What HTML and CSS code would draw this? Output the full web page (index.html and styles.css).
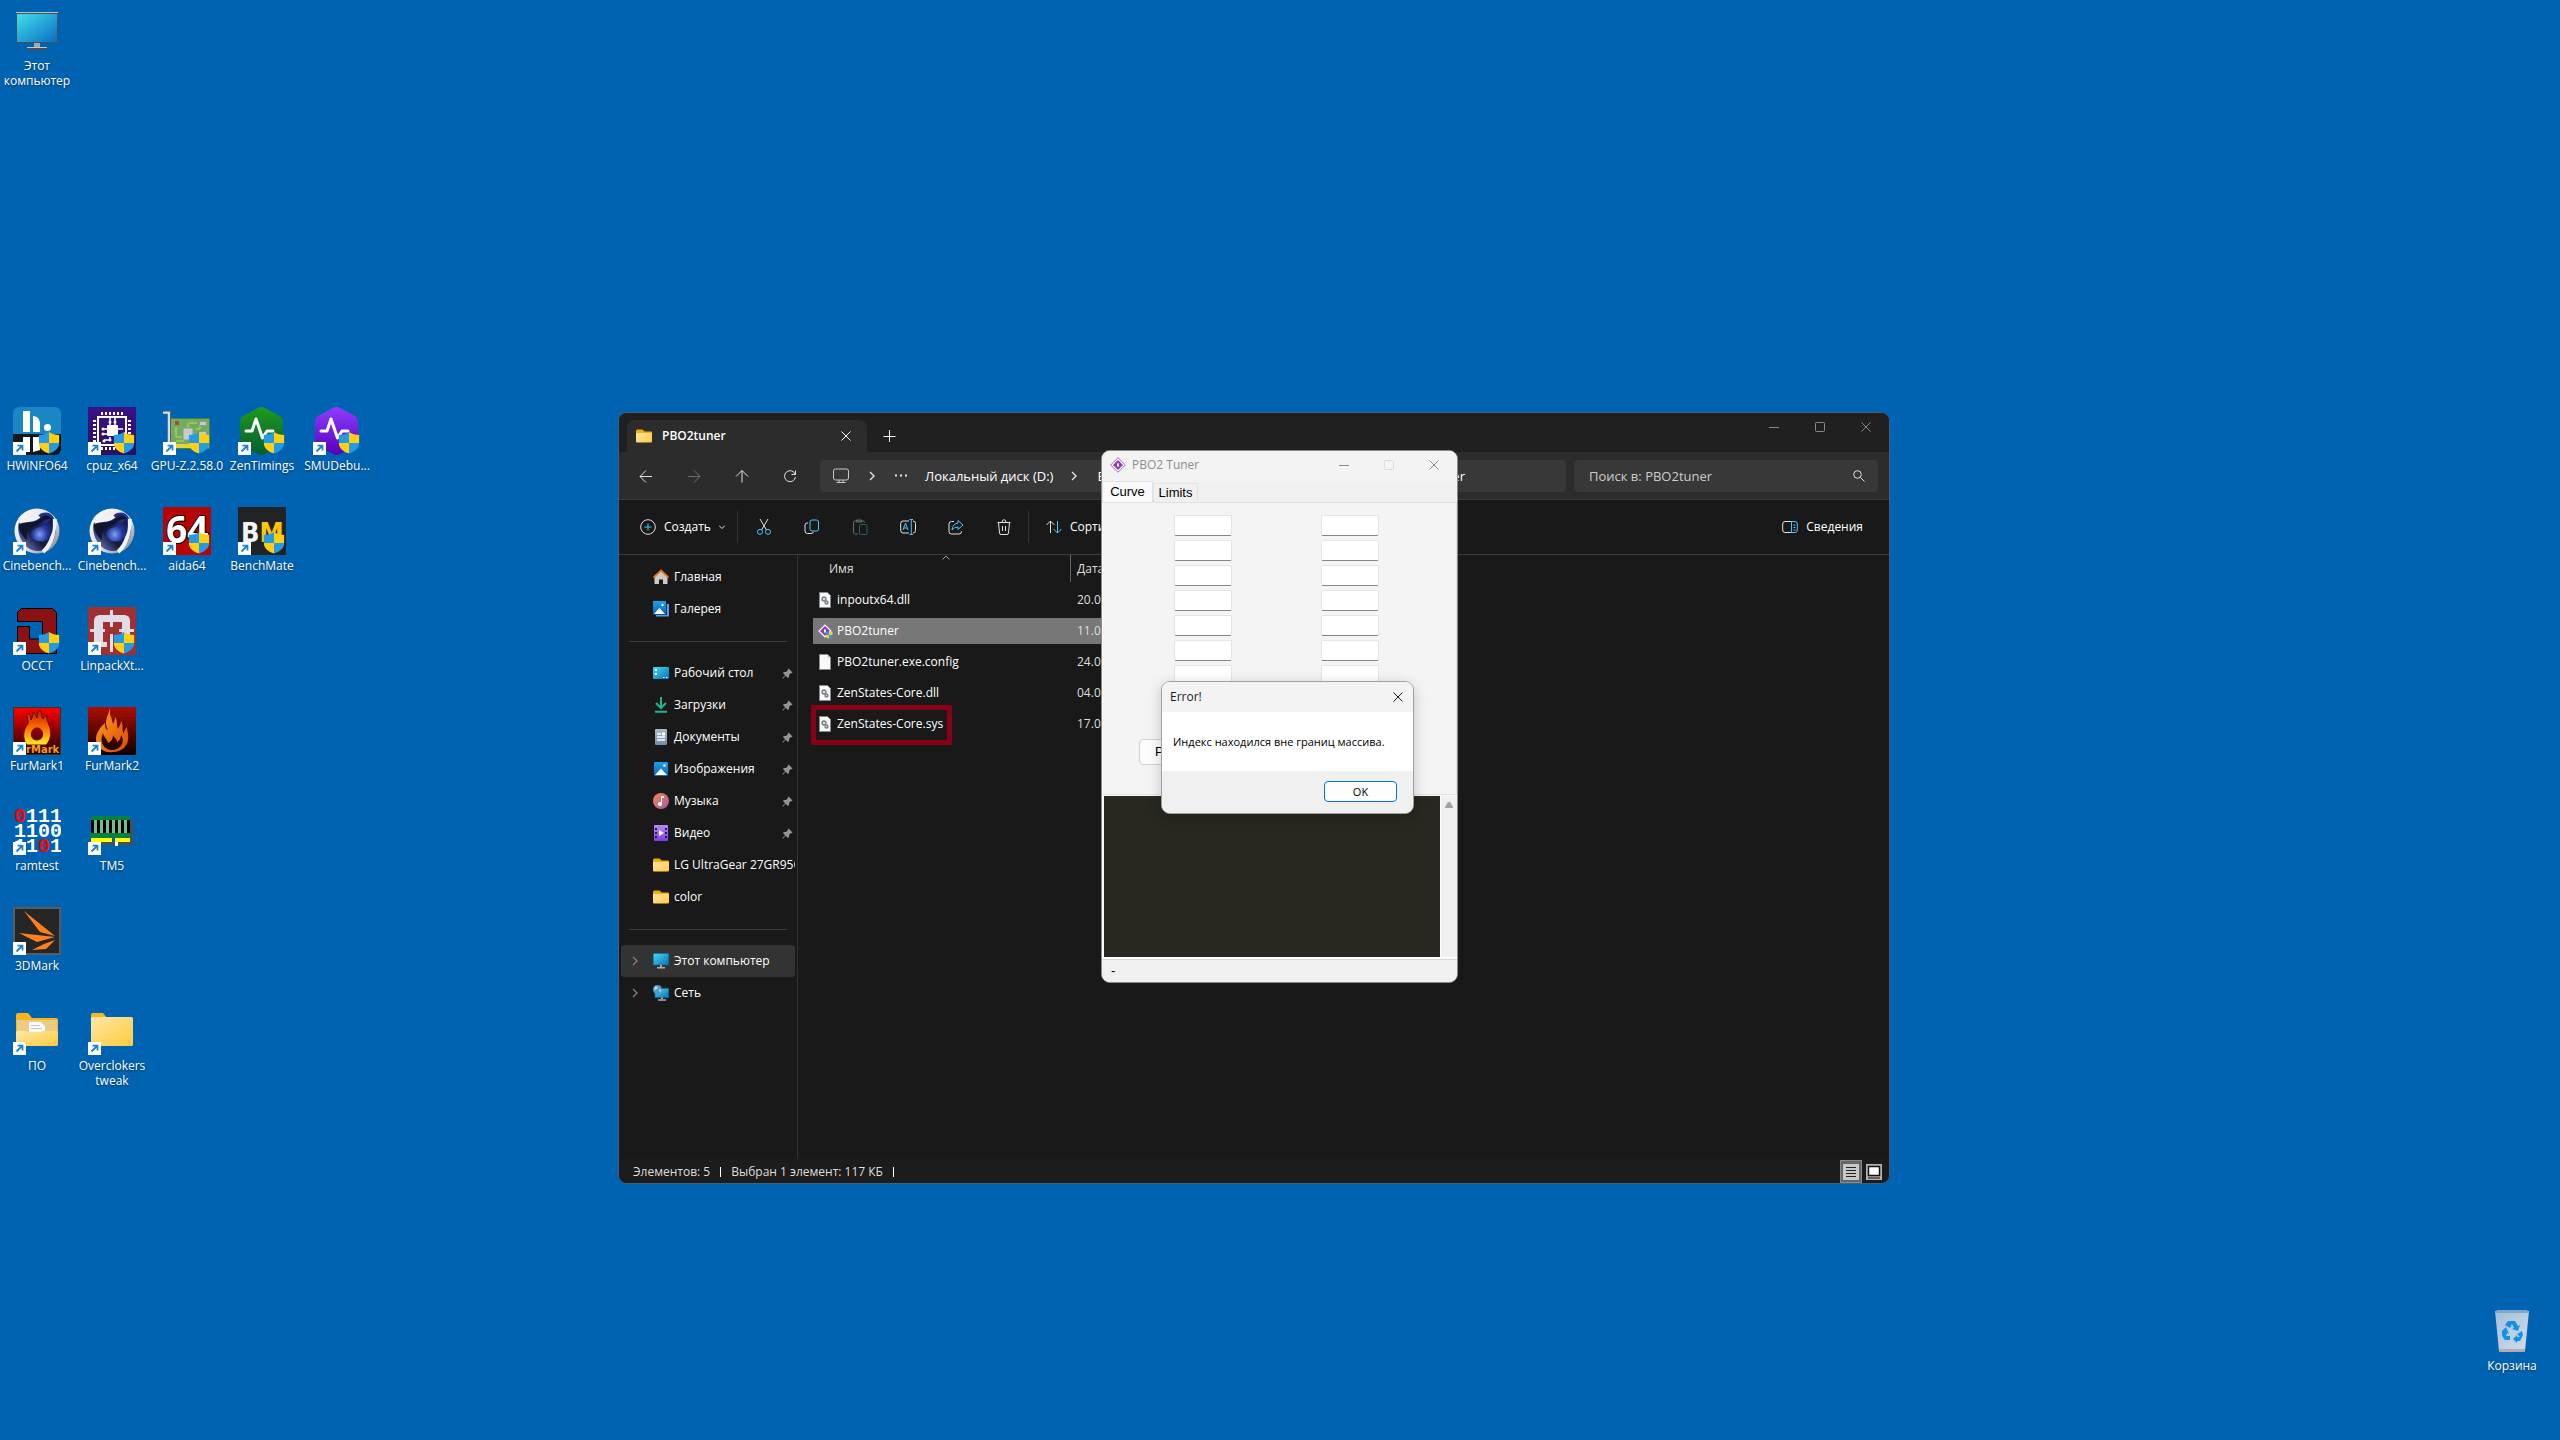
FILE: index.html
```html
<!DOCTYPE html>
<html lang="ru">
<head>
<meta charset="utf-8">
<title>PBO2tuner</title>
<link rel="stylesheet" href="styles.css">
</head>
<body>
<svg class="sprite" aria-hidden="true">
  <defs>
    <linearGradient id="screen" x1="0" y1="0" x2="1" y2="1"><stop offset="0" stop-color="#3fe0e8"/><stop offset="1" stop-color="#0b6cc4"/></linearGradient>
    <linearGradient id="folder" x1="0" y1="0" x2="1" y2="1"><stop offset="0" stop-color="#ffe9a6"/><stop offset="1" stop-color="#ffc93c"/></linearGradient>
    <linearGradient id="steel" x1="0" y1="0" x2="0" y2="1"><stop offset="0" stop-color="#1e9a1c"/><stop offset="1" stop-color="#065c34"/></linearGradient>
    <linearGradient id="violet" x1="0" y1="0" x2="0" y2="1"><stop offset="0" stop-color="#8f3dff"/><stop offset="1" stop-color="#5600b8"/></linearGradient>
    <linearGradient id="cpu" x1="0" y1="0" x2="0" y2="1"><stop offset="0" stop-color="#3a1288"/><stop offset="1" stop-color="#29105c"/></linearGradient>
    <linearGradient id="photo" x1="0" y1="0" x2="0" y2="1"><stop offset="0" stop-color="#1ea0e6"/><stop offset="1" stop-color="#0b63b8"/></linearGradient>
    <linearGradient id="doc" x1="0" y1="0" x2="0" y2="1"><stop offset="0" stop-color="#a9bccf"/><stop offset="1" stop-color="#6f8aa8"/></linearGradient>
    <linearGradient id="music" x1="0" y1="0" x2="1" y2="1"><stop offset="0" stop-color="#f28c4e"/><stop offset="1" stop-color="#a8569a"/></linearGradient>
    <linearGradient id="video" x1="0" y1="0" x2="0" y2="1"><stop offset="0" stop-color="#b88af5"/><stop offset="1" stop-color="#7c3fe0"/></linearGradient>
    <linearGradient id="fire1" x1="0" y1="0" x2="0" y2="1"><stop offset="0" stop-color="#c01800"/><stop offset=".5" stop-color="#ff6a00"/><stop offset="1" stop-color="#ffee20"/></linearGradient>
    <linearGradient id="fire2" x1="0" y1="0" x2="1" y2="1"><stop offset="0" stop-color="#f9a01c"/><stop offset="1" stop-color="#e04a08"/></linearGradient>
    <linearGradient id="red1" x1="0" y1="0" x2="0" y2="1"><stop offset="0" stop-color="#ff0000"/><stop offset="1" stop-color="#1a0000"/></linearGradient>
    <linearGradient id="red2" x1="0" y1="0" x2="0" y2="1"><stop offset="0" stop-color="#b00c00"/><stop offset="1" stop-color="#0a0000"/></linearGradient>
    <linearGradient id="chrome" x1="0" y1="0" x2="1" y2="1"><stop offset="0" stop-color="#ffffff"/><stop offset=".6" stop-color="#d8dade"/><stop offset="1" stop-color="#6e737c"/></linearGradient>
    <linearGradient id="lens" x1="0" y1="1" x2="1" y2="0"><stop offset="0" stop-color="#8a96f0"/><stop offset=".4" stop-color="#141a3c"/><stop offset="1" stop-color="#2a3aa0"/></linearGradient>
    <radialGradient id="iris" cx=".4" cy=".7" r=".7"><stop offset="0" stop-color="#7da0f0"/><stop offset=".5" stop-color="#2438a0"/><stop offset="1" stop-color="#101850"/></radialGradient>
    <linearGradient id="bin" x1="0" y1="0" x2="1" y2="1"><stop offset="0" stop-color="#a9c4dc"/><stop offset="1" stop-color="#dfe3e8"/></linearGradient>
    <clipPath id="shieldClip"><path d="M10.500 0C8 2 4 3 0 3v7c0 6 5 10 10.500 11.500C16 20 21 16 21 10V3C17 3 13 2 10.500 0z"/></clipPath>
  </defs>
  <symbol id="shield" viewBox="0 0 21 22"><g clip-path="url(#shieldClip)"><path fill="#249be6" d="M0 0h10.500v11H0zM10.500 11H21v11H10.500z"/><path fill="#ffcf12" d="M10.500 0H21v11H10.500zM0 11h10.500v11H0z"/></g></symbol>
  <symbol id="arrow" viewBox="0 0 13 13"><path fill="#fff" d="M0 0h13v13H0z"/><path fill="none" stroke="#1c84d8" stroke-width="1.800" d="M3.500 9.500 9 4M4.500 3.600h5v5"/></symbol>

  <symbol id="pc" viewBox="0 0 48 48"><path fill="#4a4f55" d="M3 5h42v31H3z"/><path fill="#b9c2c9" d="M3 5h42v1H3z"/><path fill="url(#screen)" d="M4 7h40v28H4z"/><path fill="#a3a8ad" d="M21 36h6v4h-6z"/><path fill="#c4c8cc" d="M14 40h20v1H14z"/><path fill="#4c5054" d="M14 41h20v2H14z"/></symbol>
  <symbol id="hw" viewBox="0 0 48 48"><path fill="#1a86c4" d="M6 0h36a6 6 0 0 1 6 6v21H0V6a6 6 0 0 1 6-6z"/><path fill="#15181c" d="M0 27h48v15a6 6 0 0 1-6 6H6a6 6 0 0 1-6-6z"/><path fill="#fff" d="M10 4h7v21h-7zM20 9c5 0 7 4 7 8v8h-7zM10 30h7v15h-7zM20 30h7v13l-7 2z"/><circle cx="34.500" cy="20.500" r="3.500" fill="#fff"/></symbol>
  <symbol id="cpuz" viewBox="0 0 48 48"><path fill="url(#cpu)" d="M0 0h48v48H0z"/><g fill="none" stroke="#fff"><path stroke-width="2" d="M10 10h28v28H10z"/><path stroke-width="3" stroke-dasharray="2 2" d="M13 6.500h23M13 41.500h23M6.500 13v23M41.500 13v23"/><path stroke-width="1.500" d="M22 10v8M27 10v8M14 22h5M14 27h5M30 22h5M22 30v3h-6M27 30v5"/></g><rect x="19" y="18" width="11" height="11" rx="1" fill="#fff"/><g fill="#fff"><circle cx="22" cy="15" r="1.500"/><circle cx="27" cy="15" r="1.500"/><circle cx="15" cy="22" r="1.500"/><circle cx="15" cy="27" r="1.500"/><circle cx="16" cy="34" r="1.500"/><circle cx="22" cy="33" r="1.500"/></g></symbol>
  <symbol id="gpuz" viewBox="0 0 48 48"><path fill="#6fae62" stroke="#4a8044" d="M7.500 11.500h39v30h-39z"/><path fill="none" stroke="#c8d84a" d="M13 20v10h6M25 16v6M34 16h-8M33 22h4v-6M13 34h8"/><path fill="#b8433c" d="M12 14h4v4h-4z"/><path fill="#c6cdc6" stroke="#909890" d="M20 21h10v12H20zM36.500 14.500h7v4h-7zM36.500 24.500h7v4h-7z"/><path fill="#e6d43a" d="M12 37h16v4H12z"/><path fill="none" stroke="#d8dcdf" stroke-width="2.500" d="M0 5.500h6V42"/><path fill="none" stroke="#5a6064" d="M0 4h7.500v38"/></symbol>
  <symbol id="pulse" viewBox="0 0 48 48"><path fill="none" stroke="#fff" stroke-width="3" stroke-linejoin="round" stroke-linecap="round" d="M8 24h6l4-12 6.500 19 4.500-7h6"/></symbol>
  <symbol id="hexagon" viewBox="0 0 48 48"><path stroke="none" d="M20 1q3.500-2 7 0l15 8q3 2 3 5v20q0 3-3 5l-15 8q-3.500 2-7 0L5 39q-3-2-3-5V14q0-3 3-5z"/></symbol>
  <symbol id="cine" viewBox="0 0 48 48"><circle cx="24" cy="24" r="22.500" fill="url(#chrome)"/><path fill="url(#lens)" d="M6 15C14 12 21 13 26 8c5-4 12-3 15 3 4 6 2 21-4 28-8 8-20 6-26-2C6 31 4 22 6 15z"/><path fill="none" stroke="#eef1f5" stroke-width="4" d="M6 15C14 12 21 14 26 9M42 12c-1 12-2 24-12 33"/><path fill="#10142c" d="M6 18C16 15 22 17 28 11c4-4 9-3 11 1-9-1-10 5-17 7-7 3-9 6-8 14-5-4-8-9-8-15z"/><path fill="url(#iris)" d="M39 11c2 10 1 20-8 23-7 2-13-2-13-7 0-7 14-6 21-16z"/></symbol>
  <symbol id="occt" viewBox="0 0 48 48"><path fill="#8b1214" stroke="#000" d="M8.500 1.500h31l4 4v41h-35l-4-4V19.500h12v12.500h13V14.500h-25v-9z"/></symbol>
  <symbol id="linpack" viewBox="0 0 48 48"><path fill="#a23030" d="M0 0h48v48H0z"/><path fill="#e0dde8" d="M6 14q0-6 6-6h24q6 0 6 6v26h-8V15H15v20h4v5H6zM22 3h3v17h-3zM22 27h3v18h-3zM2 22h15v3H2zM31 22h15v3H31z"/></symbol>
  <symbol id="fur1" viewBox="0 0 48 48"><path fill="#33302e" d="M0 0h48v48H0z"/><path fill="url(#red1)" d="M1 1h46v46H1z"/><path fill="url(#fire1)" stroke="#5a1000" fill-rule="evenodd" d="M14 38C9 32 10 22 15 17c1-4-2-7-1-11 3 1 4 4 4 7 2-3 1-6 3-8 2 2 2 4 3 6 1-3 0-6 3-8 2 3 1 6 3 9 1-2 2-3 4-4-1 4 1 7 2 10 3 7 2 15-3 20zm10-17c-7 0-8 12 0 12s7-12 0-12z"/></symbol>
  <symbol id="fur2" viewBox="0 0 48 48"><path fill="url(#red2)" d="M0 0h48v48H0z"/><path fill="url(#fire2)" d="M22 1c-1 6-4 9-4 15 0 3 1 5 2 7-3-1-3-4-3-7-7 6-11 14-8 21 3 6 9 9 16 8 8 0 14-5 15-12 1-6-1-8-1-13-2 2-3 4-3 7-3-5 0-9-3-13 0 4-2 5-3 8-2-5 0-8-3-12 0 3-1 5-2 7-1-3-1-6-3-9zm3 27c1 3 4 3 4 7 3-1 4-5 4-7 5 7-1 15-9 15s-13-8-9-17c1 5 4 5 5 10 4-2 5-5 5-8z"/></symbol>
  <symbol id="tm5" viewBox="0 0 48 48"><path fill="#4a4f52" d="M42 13h3v25H15v-3h27z"/><path fill="#04823c" d="M3 9h39v22H3z"/><path fill="#000" d="M3 13h39v13H3z"/><path stroke="#6fbe95" stroke-width="3" d="M7.500 13v13M13.500 13v13M19.500 13v13M25.500 13v13M31.500 13v13M37.500 13v13"/><path fill="#ff0" d="M3 31h21v4H3zM27 31h15v4H27z"/><path fill="#fff" d="M27 35h3v4h-3z"/></symbol>
  <symbol id="mark3d" viewBox="0 0 48 48"><path fill="#5b5b5e" d="M0 0h48v48H0z"/><path fill="#262626" d="M2 2h44v44H2z"/><path fill="#ff7f1c" d="M11 4l31 25-15-4zM6 26l36 4-18 5zM42 33l-9 9-14 1 12-6z"/></symbol>
  <symbol id="folderbig" viewBox="0 0 48 48"><path fill="#f8b61b" d="M3 8q0-2 2-2h10l4 5h24q2 0 2 2v12H3z"/><rect x="3" y="10" width="42" height="29" rx="1.500" fill="url(#folder)"/></symbol>
  <symbol id="folderopen" viewBox="0 0 48 48"><path fill="#f8b61b" d="M3 8q0-2 2-2h10l4 5h24q2 0 2 2v20H3z"/><path fill="#eccb85" d="M4 13h40v20H4z"/><path fill="#fafafa" d="M16 15h12l4 4v14H16z"/><path stroke="#c4c8cc" d="M18 18.500h9M18 21.500h11"/><path fill="url(#folder)" d="M3 26q0-2 2-2h7l4 1h10l4-1h13q2 0 2 2v12q0 1-2 1H5q-2 0-2-1z"/></symbol>
  <symbol id="recycle" viewBox="0 0 48 48"><path fill="url(#bin)" opacity=".95" d="M7 4h34l-4 40H11z"/><path fill="#7ea7c9" d="M9 3h30l2 3H7z"/><path fill="#b3a9ae" d="M11 42h26l-.3 3H11.300z"/><g fill="#1490e8"><path d="M20 14h7l3 5 2-1-2 6-6-2 2-1-2-4-2 4-5-3z"/><path d="M14 24l4-4 3 7-2-1-1 3h4v4h-5l-3-4z"/><path d="M34 24l-5 3 3 3h-3v-2l-4 4 4 4v-2h3l3-6z"/></g></symbol>

  <symbol id="folder16" viewBox="0 0 16 16"><path fill="#f5ad0c" d="M0 3q0-1.500 1.500-1.500h5L8.500 3.500H15q1 0 1 1V8H0z"/><rect y="5" width="16" height="9.500" rx="1" fill="url(#folder)"/></symbol>
  <symbol id="home" viewBox="0 0 16 16"><path fill="#c9cacb" d="M1.500 7 8 1.500 14.500 7v8H10v-4.500H6V15H1.500z"/><path fill="none" stroke="#e8751a" stroke-width="1.800" d="M.5 8.500 8 1.500l7.500 7"/></symbol>
  <symbol id="gallery" viewBox="0 0 16 16"><path fill="#5f9ede" d="M3 3h13v12.500H3z"/><path fill="#0a3e78" d="M3 3h11v11H3z"/><path fill="url(#photo)" d="M0 0h13v13.500H0z"/><path fill="#fff" d="M1 13l5.500-6 5.500 6z"/><circle cx="9.500" cy="4" r="1.200" fill="#fff"/></symbol>
  <symbol id="desk" viewBox="0 0 16 16"><rect y="2" width="16" height="12" rx="1" fill="url(#screen)"/><path fill="#fff" d="M2 4h2v2H2zM2 8h2v2H2zM10 12h1.500v1H10zM13 12h1.500v1H13z"/></symbol>
  <symbol id="down" viewBox="0 0 16 16"><path fill="none" stroke="#1db690" stroke-width="2" d="M8 0v10M3 6l5 5 5-5M2 14.800h12"/></symbol>
  <symbol id="docs" viewBox="0 0 16 16"><rect x="2" width="12" height="16" rx="1" fill="url(#doc)"/><path stroke="#fff" stroke-width="1.400" d="M4 5h4M4 8h8M4 11h8"/><path fill="#fff" d="M9 3.500h3v3H9z"/></symbol>
  <symbol id="pics" viewBox="0 0 16 16"><rect x="1" y="1" width="14" height="14" rx="1" fill="url(#photo)"/><path fill="#fff" d="M2 14l6-6.500 6 6.500z"/><circle cx="11.500" cy="4.500" r="1.300" fill="#fff"/></symbol>
  <symbol id="note" viewBox="0 0 16 16"><circle cx="8" cy="8" r="8" fill="url(#music)"/><path fill="#fff" d="M8 3h3v2H9v6a2 2 0 1 1-1-1.700z"/></symbol>
  <symbol id="film" viewBox="0 0 16 16"><rect x="1" width="14" height="16" rx="1" fill="url(#video)"/><path fill="#fff" d="M6 5l5 3-5 3z"/><path stroke="#2e1466" stroke-width="2" stroke-dasharray="2 2" d="M3 3v10M13 3v10"/></symbol>
  <symbol id="pc16" viewBox="0 0 16 16"><path fill="url(#screen)" stroke="#1a6a8c" stroke-width=".6" d="M.3.500h15.400v11.500H.3z"/><path fill="#a7b0b8" d="M7 12h2v2H7zM4 14h8v1.500H4z"/></symbol>
  <symbol id="net" viewBox="0 0 16 16"><path fill="url(#screen)" stroke="#1a6a8c" stroke-width=".6" d="M2 3.500h13.700v9H2z"/><path fill="#a7b0b8" d="M8 12.500h2V14H8zM5 14.300h8v1.500H5z"/><circle cx="4.500" cy="4.500" r="4.500" fill="#4f9bc9"/><path fill="#c5e0ef" d="M2 1.500l3 .5-1 2-3 1zM6 4l2.500 1L7 8z"/></symbol>
  <symbol id="gearfile" viewBox="0 0 12 16"><path fill="#f8f8f8" stroke="#8a8a8a" d="M.5.500h8l3 3v12H.5z"/><g fill="none" stroke="#7d8790" stroke-width="1.600"><circle cx="5" cy="7" r="1.900"/><circle cx="7.500" cy="10.500" r="1.400"/></g></symbol>
  <symbol id="plainfile" viewBox="0 0 12 16"><path fill="#fafafa" stroke="#8a8a8a" d="M.5.500h8l3 3v12H.5z"/><path fill="#c8c8c8" d="M8.500.500v3h3z"/></symbol>
  <symbol id="diamond" viewBox="0 0 16 16"><path fill="#fff" stroke="#a566c4" d="M8 .7 15.300 8 8 15.300.7 8z"/><path fill="#8a3fb0" d="M8 3l5 5-5 5-5-5z"/><ellipse cx="8" cy="8" rx="1" ry="2" fill="#fff"/></symbol>
  <symbol id="pin" viewBox="0 0 12 12"><path fill="#8f979e" d="M7 .5 11.500 5l-1.300.8-.7-.1-1.900 1.900.1 2.200-1.200 1.200L4 8.500.8 11.700.3 11.200 3.500 8 1 5.500l1.200-1.200 2.200.1 1.900-1.900-.1-.7z"/></symbol>
  <symbol id="chev" viewBox="0 0 6 10"><path fill="none" stroke="currentColor" stroke-width="1.400" d="M1 1l4 4-4 4"/></symbol>
  <symbol id="cross" viewBox="0 0 10 10"><path fill="none" stroke="currentColor" d="M.5.500l9 9M9.500.500l-9 9"/></symbol>
  <symbol id="dash" viewBox="0 0 10 10"><path stroke="currentColor" d="M0 5.500h10"/></symbol>
  <symbol id="square" viewBox="0 0 10 10"><rect x=".5" y=".5" width="9" height="9" rx="1" fill="none" stroke="currentColor"/></symbol>
</svg>

<main class="desktop">
  <div class="icon-row icon-row-first">
    <a class="shortcut" href="#"><span class="tile"><svg><use href="#pc"/></svg></span><span>Этот<br>компьютер</span></a>
  </div>
  <div class="icon-row">
    <a class="shortcut" href="#"><span class="tile"><svg><use href="#hw"/></svg><svg class="uac"><use href="#shield"/></svg><svg class="lnk"><use href="#arrow"/></svg></span><span>HWiNFO64</span></a>
    <a class="shortcut" href="#"><span class="tile"><svg><use href="#cpuz"/></svg><svg class="uac"><use href="#shield"/></svg><svg class="lnk"><use href="#arrow"/></svg></span><span>cpuz_x64</span></a>
    <a class="shortcut" href="#"><span class="tile"><svg><use href="#gpuz"/></svg><svg class="uac"><use href="#shield"/></svg><svg class="lnk"><use href="#arrow"/></svg></span><span>GPU-Z.2.58.0</span></a>
    <a class="shortcut" href="#"><span class="tile"><svg><use href="#hexagon" fill="url(#steel)"/><use href="#pulse"/></svg><svg class="uac"><use href="#shield"/></svg><svg class="lnk"><use href="#arrow"/></svg></span><span>ZenTimings</span></a>
    <a class="shortcut" href="#"><span class="tile"><svg><use href="#hexagon" fill="url(#violet)"/><use href="#pulse"/></svg><svg class="uac"><use href="#shield"/></svg><svg class="lnk"><use href="#arrow"/></svg></span><span>SMUDebu...</span></a>
  </div>
  <div class="icon-row">
    <a class="shortcut" href="#"><span class="tile"><svg><use href="#cine"/></svg><svg class="lnk"><use href="#arrow"/></svg></span><span>Cinebench...</span></a>
    <a class="shortcut" href="#"><span class="tile"><svg><use href="#cine"/></svg><svg class="lnk"><use href="#arrow"/></svg></span><span>Cinebench...</span></a>
    <a class="shortcut" href="#"><span class="tile"><svg viewBox="0 0 48 48"><path fill="#b80404" d="M0 0h48v48H0z"/><text x="3" y="36" class="logo-64">64</text></svg><svg class="uac"><use href="#shield"/></svg><svg class="lnk"><use href="#arrow"/></svg></span><span>aida64</span></a>
    <a class="shortcut" href="#"><span class="tile"><svg viewBox="0 0 48 48"><path fill="#222326" d="M0 0h48v48H0z"/><text x="3" y="35" class="logo-bm" fill="#f4f4f4">B<tspan fill="#fcc60c">M</tspan></text></svg><svg class="uac"><use href="#shield"/></svg><svg class="lnk"><use href="#arrow"/></svg></span><span>BenchMate</span></a>
  </div>
  <div class="icon-row">
    <a class="shortcut" href="#"><span class="tile"><svg><use href="#occt"/></svg><svg class="uac"><use href="#shield"/></svg><svg class="lnk"><use href="#arrow"/></svg></span><span>OCCT</span></a>
    <a class="shortcut" href="#"><span class="tile"><svg><use href="#linpack"/></svg><svg class="uac"><use href="#shield"/></svg><svg class="lnk"><use href="#arrow"/></svg></span><span>LinpackXt...</span></a>
  </div>
  <div class="icon-row">
    <a class="shortcut" href="#"><span class="tile"><svg viewBox="0 0 48 48"><use href="#fur1"/><text x="13" y="46" class="logo-fur">rMark</text></svg><svg class="lnk"><use href="#arrow"/></svg></span><span>FurMark1</span></a>
    <a class="shortcut" href="#"><span class="tile"><svg><use href="#fur2"/></svg><svg class="lnk"><use href="#arrow"/></svg></span><span>FurMark2</span></a>
  </div>
  <div class="icon-row">
    <a class="shortcut" href="#"><span class="tile"><svg viewBox="0 0 48 48" class="logo-ram"><text x="1" y="15"><tspan fill="#f00">0</tspan>111</text><text x="1" y="30">1100</text><text x="1" y="45">11<tspan fill="#f00">0</tspan>1</text></svg><svg class="lnk"><use href="#arrow"/></svg></span><span>ramtest</span></a>
    <a class="shortcut" href="#"><span class="tile"><svg><use href="#tm5"/></svg><svg class="lnk"><use href="#arrow"/></svg></span><span>TM5</span></a>
  </div>
  <div class="icon-row">
    <a class="shortcut" href="#"><span class="tile"><svg><use href="#mark3d"/></svg><svg class="lnk"><use href="#arrow"/></svg></span><span>3DMark</span></a>
  </div>
  <div class="icon-row">
    <a class="shortcut" href="#"><span class="tile"><svg><use href="#folderopen"/></svg><svg class="lnk"><use href="#arrow"/></svg></span><span>ПО</span></a>
    <a class="shortcut" href="#"><span class="tile"><svg><use href="#folderbig"/></svg><svg class="lnk"><use href="#arrow"/></svg></span><span>Overclokers<br>tweak</span></a>
  </div>
  <a class="shortcut trash" href="#"><span class="tile"><svg><use href="#recycle"/></svg></span><span>Корзина</span></a>

  <section class="explorer" aria-label="Проводник">
    <header class="tabs">
      <div class="tab"><svg class="i16"><use href="#folder16"/></svg><span>PBO2tuner</span><button aria-label="Закрыть вкладку"><svg class="i10"><use href="#cross"/></svg></button></div>
      <button class="newtab" aria-label="Новая вкладка"><svg class="i12" viewBox="0 0 12 12"><path stroke="currentColor" d="M5.500 0v12M-.5 6.500h12"/></svg></button>
      <div class="caption">
        <button aria-label="Свернуть"><svg class="i10"><use href="#dash"/></svg></button>
        <button aria-label="Развернуть"><svg class="i10"><use href="#square"/></svg></button>
        <button aria-label="Закрыть"><svg class="i10"><use href="#cross"/></svg></button>
      </div>
    </header>
    <nav class="address">
      <button aria-label="Назад"><svg class="i12" viewBox="0 0 12 12"><path d="M12 6.500H0M6 .5l-6 6 6 6"/></svg></button>
      <button class="off" aria-label="Вперёд"><svg class="i12" viewBox="0 0 12 12"><path d="M0 6.500h12M6 .5l6 6-6 6"/></svg></button>
      <button aria-label="Вверх"><svg class="i12" viewBox="0 0 12 12"><path d="M6 12.500V.5M0 6.500l6-6 6 6"/></svg></button>
      <button aria-label="Обновить"><svg class="i12" viewBox="0 0 12 12"><path d="M11.300 4.500A5.500 5.500 0 1 0 11.500 7M11.500.500v4h-4"/></svg></button>
      <div class="path">
        <svg class="i16 screen-line" viewBox="0 0 16 16"><path d="M2.500 1h11q2 0 2 2v7q0 2-2 2h-11q-2 0-2-2V3q0-2 2-2zM3.500 14.500h9M6 12v2M10 12v2"/></svg>
        <svg class="sep"><use href="#chev"/></svg>
        <svg class="i12" viewBox="0 0 12 12"><path class="dots" d="M0 4.500h2v2H0zM5 4.500h2v2H5zM10 4.500h2v2h-2z"/></svg>
        <a href="#">Локальный диск (D:)</a>
        <svg class="sep"><use href="#chev"/></svg>
        <a class="drive" href="#">E</a>
        <a class="leaf" href="#">PBO2tuner</a>
      </div>
      <div class="search"><input type="text" placeholder="Поиск в: PBO2tuner" aria-label="Поиск"><svg class="i12" viewBox="0 0 12 12"><circle cx="4.500" cy="4.500" r="3.800"/><path d="M7.500 7.500l4 4"/></svg></div>
    </nav>
    <div class="tools">
      <button class="create"><svg class="i16" viewBox="0 0 16 16"><circle cx="8" cy="8" r="7.300"/><path class="blue" d="M8 4.500v7M4.500 8h7"/></svg>Создать<svg class="i6" viewBox="0 0 6 6"><path d="M0 1.500l3 3 3-3"/></svg></button>
      <i class="bar"></i>
      <button aria-label="Вырезать"><svg class="i16" viewBox="0 0 16 16"><path d="M4 0l6.500 11M12 0L5.500 11"/><circle class="blue" cx="4" cy="12.800" r="2.500"/><circle class="blue" cx="12" cy="12.800" r="2.500"/></svg></button>
      <button aria-label="Копировать"><svg class="i16" viewBox="0 0 16 16"><path d="M4 4H3Q1 4 1 6v6q0 2.500 2.500 2.500H7q2 0 2.500-1.500"/><rect class="blue" x="6" y="1" width="8.500" height="11" rx="2"/></svg></button>
      <button class="off" aria-label="Вставить"><svg class="i16" viewBox="0 0 16 16"><path d="M6 15H3Q1.500 15 1.500 13V3.500Q1.500 2 3 2h8q1.500 0 1.500 1.500M4.500 1h5v2h-5z"/><rect class="blue" x="7.500" y="5.500" width="7.500" height="10" rx="1"/></svg></button>
      <button aria-label="Переименовать"><svg class="i16" viewBox="0 0 16 16"><path d="M9 2H3Q.7 2 .7 4.500v7Q.7 14 3 14h6M13 2q2.500 0 2.500 2.500v7Q15.500 14 13 14"/><path class="blue" d="M3 11l2.500-7L8 11M4 9h3M9.500.500h3.500M9.500 15.500H13M11.300.500v15"/></svg></button>
      <button aria-label="Поделиться"><svg class="i16" viewBox="0 0 16 16"><path d="M6 2.500H3.500Q1 2.500 1 5v7.500Q1 15 3.500 15H11q2.500 0 2.500-2.500V12"/><path class="blue" d="M10 1.500L15 6l-5 4.500V8Q6 8 4 11q.5-6 6-7z"/></svg></button>
      <button aria-label="Удалить"><svg class="i16" viewBox="0 0 16 16"><path d="M1.500 3.500h13M2.500 3.500l1 10.500q.2 1.500 1.500 1.500h6q1.300 0 1.500-1.500l1-10.500M6 3.500q0-2.800 2-2.800t2 2.800M6.500 7v5M9.500 7v5"/></svg></button>
      <i class="bar"></i>
      <button class="sort"><svg class="i16" viewBox="0 0 16 16"><path d="M4.500 14V2M.5 6l4-4 4 4"/><path class="blue" d="M11.500 2v12M7.500 10l4 4 4-4"/></svg>Сортировать</button>
      <button class="details"><svg class="i16" viewBox="0 0 16 16"><path d="M9.500 2.500H3Q.7 2.500.7 5v6q0 2.500 2.300 2.500h6.500"/><path class="blue" d="M9.500 2.500H13q2.300 0 2.300 2.500v6q0 2.500-2.300 2.500H9.500zM11.500 6h2M11.500 8.500h2M11.500 11h2"/></svg>Сведения</button>
    </div>
    <div class="content">
      <ul class="side">
        <li><a href="#"><svg class="i16"><use href="#home"/></svg>Главная</a></li>
        <li><a href="#"><svg class="i16"><use href="#gallery"/></svg>Галерея</a></li>
        <li class="rule"></li>
        <li><a href="#"><svg class="i16"><use href="#desk"/></svg>Рабочий стол</a><svg class="pin"><use href="#pin"/></svg></li>
        <li><a href="#"><svg class="i16"><use href="#down"/></svg>Загрузки</a><svg class="pin"><use href="#pin"/></svg></li>
        <li><a href="#"><svg class="i16"><use href="#docs"/></svg>Документы</a><svg class="pin"><use href="#pin"/></svg></li>
        <li><a href="#"><svg class="i16"><use href="#pics"/></svg>Изображения</a><svg class="pin"><use href="#pin"/></svg></li>
        <li><a href="#"><svg class="i16"><use href="#note"/></svg>Музыка</a><svg class="pin"><use href="#pin"/></svg></li>
        <li><a href="#"><svg class="i16"><use href="#film"/></svg>Видео</a><svg class="pin"><use href="#pin"/></svg></li>
        <li><a href="#"><svg class="i16"><use href="#folder16"/></svg>LG UltraGear 27GR95QE</a></li>
        <li><a href="#"><svg class="i16"><use href="#folder16"/></svg>color</a></li>
        <li class="rule"></li>
        <li class="tree on"><svg class="twist"><use href="#chev"/></svg><a href="#"><svg class="i16"><use href="#pc16"/></svg>Этот компьютер</a></li>
        <li class="tree"><svg class="twist"><use href="#chev"/></svg><a href="#"><svg class="i16"><use href="#net"/></svg>Сеть</a></li>
      </ul>
      <div class="files">
        <table>
          <thead><tr><th class="name">Имя<svg class="asc" viewBox="0 0 8 5"><path fill="none" stroke="#a0a0a0" d="M.5 4.500L4 1l3.500 3.500"/></svg></th><th>Дата</th></tr></thead>
          <tbody>
            <tr><td class="name"><svg class="fi"><use href="#gearfile"/></svg>inpoutx64.dll</td><td>20.01</td></tr>
            <tr class="on"><td class="name"><svg class="fi exe"><use href="#diamond"/><svg x="8" y="8" width="8" height="8"><use href="#shield"/></svg></svg>PBO2tuner</td><td>11.04</td></tr>
            <tr><td class="name"><svg class="fi"><use href="#plainfile"/></svg>PBO2tuner.exe.config</td><td>24.01</td></tr>
            <tr><td class="name"><svg class="fi"><use href="#gearfile"/></svg>ZenStates-Core.dll</td><td>04.03</td></tr>
            <tr><td class="name mark"><svg class="fi"><use href="#gearfile"/></svg>ZenStates-Core.sys</td><td>17.04</td></tr>
          </tbody>
        </table>
      </div>
    </div>
    <footer class="status">
      <span>Элементов: 5</span><i></i><span>Выбран 1 элемент: 117 КБ</span><i></i>
      <button class="view on" aria-label="Таблица"><svg class="i16" viewBox="0 0 16 16"><path fill="#c8c8c8" d="M0 0h16v16H0z"/><path stroke="#222" d="M3 3.500h10M3 6.500h10M3 9.500h10M3 12.500h10"/></svg></button>
      <button class="view" aria-label="Крупные значки"><svg class="i16" viewBox="0 0 16 16"><path fill="#b4b4b4" d="M0 0h16v16H0z"/><path fill="#fff" stroke="#111" stroke-width="1.500" d="M2.500 2.500h11v9h-11z"/><path stroke="#111" d="M2 14h12"/></svg></button>
    </footer>
  </section>

  <section class="tuner" aria-label="PBO2 Tuner">
    <header class="tuner-title"><svg class="i16"><use href="#diamond"/></svg><span>PBO2 Tuner</span>
      <button aria-label="Minimize"><svg class="i10"><use href="#dash"/></svg></button>
      <button class="off" aria-label="Maximize" disabled><svg class="i10"><use href="#square"/></svg></button>
      <button aria-label="Close"><svg class="i10"><use href="#cross"/></svg></button>
    </header>
    <div class="tuner-tabs"><button class="on">Curve</button><button>Limits</button></div>
    <div class="page">
      <div class="grid">
        <input aria-label="Core 0"><input aria-label="Core 8">
        <input aria-label="Core 1"><input aria-label="Core 9">
        <input aria-label="Core 2"><input aria-label="Core 10">
        <input aria-label="Core 3"><input aria-label="Core 11">
        <input aria-label="Core 4"><input aria-label="Core 12">
        <input aria-label="Core 5"><input aria-label="Core 13">
        <input aria-label="Core 6"><input aria-label="Core 14">
        <input aria-label="Core 7"><input aria-label="Core 15">
      </div>
      <button class="apply">P</button>
    </div>
    <div class="log"><textarea aria-label="Log" readonly></textarea><div class="scroll"><svg viewBox="0 0 8 6"><path fill="#a2a2a2" d="M3 0h2l3 5v1H0V5z"/></svg></div></div>
    <footer class="tuner-status">-</footer>
  </section>

  <section class="dialog" role="alertdialog" aria-label="Error!">
    <header><span>Error!</span><button aria-label="Close"><svg class="i10"><use href="#cross"/></svg></button></header>
    <p>Индекс находился вне границ массива.</p>
    <footer><button>OK</button></footer>
  </section>
</main>
</body>
</html>
```
FILE: styles.css
```css
*, *::before, *::after { box-sizing: border-box; }
body {
  margin: 0;
  background: #0063b1;
  font: 12px/16px "Open Sans", "Noto Sans", sans-serif;
  color: #fff;
}
a { color: inherit; text-decoration: none; }
button { display: flex; align-items: center; justify-content: center; padding: 0; border: 0; background: none; color: inherit; font: inherit; }
input, textarea { font: inherit; }
svg { display: block; flex: none; }
.sprite { position: absolute; width: 0; height: 0; }
.i16 { width: 16px; height: 16px; }
.i12 { width: 12px; height: 12px; overflow: visible; }
.i10 { width: 10px; height: 10px; }
.i6 { width: 6px; height: 6px; }

/* Desktop */
.desktop { position: relative; min-height: 100vh; overflow: hidden; }
.icon-row { display: flex; gap: 1px; height: 100px; }
.icon-row-first { margin-bottom: 300px; }
.shortcut {
  display: flex; flex-direction: column; align-items: center; gap: 3px;
  width: 74px; padding-top: 7px;
  line-height: 15px; text-align: center; white-space: nowrap;
  text-shadow: 0 1px 2px rgba(0, 0, 0, .5);
}
.tile { position: relative; width: 48px; height: 48px; }
.tile svg { width: 48px; height: 48px; }
.tile .lnk { position: absolute; left: 0; bottom: 0; width: 13px; height: 13px; }
.tile .uac { position: absolute; right: 1px; bottom: 1px; width: 22px; height: 22px; }
.trash { position: absolute; right: 11px; bottom: 40px; height: 100px; }
.logo-64 { font: bold 37px "Open Sans", sans-serif; fill: #fff; stroke: #000; stroke-width: 2px; paint-order: stroke; text-shadow: none; }
.logo-bm { font: bold 27px "Liberation Sans Narrow", "DejaVu Sans Condensed", sans-serif; text-shadow: none; }
.logo-fur { font: bold 10px "DejaVu Sans", sans-serif; fill: #ff9a10; text-shadow: none; }
.logo-ram { font: bold 20px "Liberation Mono", monospace; fill: #fff; text-shadow: none; }

/* Explorer window */
.explorer {
  position: absolute; left: 618px; top: 412px; width: 1272px; height: 772px;
  display: flex; flex-direction: column;
  border: 1px solid #43617c; border-radius: 9px;
  background: #191919; overflow: hidden;
}
.tabs { display: flex; align-items: flex-start; height: 39px; padding-left: 8px; background: #202020; }
.tab { display: flex; align-items: center; gap: 10px; width: 240px; height: 32px; margin-top: 7px; padding: 0 16px 0 9px; border-radius: 8px 8px 0 0; background: #2c2c2c; font-weight: 600; }
.tab button { margin-left: auto; }
.newtab { width: 46px; height: 32px; margin-top: 7px; }
.caption { display: flex; margin-left: auto; color: #8a8a8a; }
.caption button { width: 46px; height: 28px; }
.address { display: flex; align-items: center; height: 48px; padding: 0 11px 0 3px; border-bottom: 1px solid #3d3d3d; background: #2c2c2c; font-size: 13px; }
.address > button { width: 48px; height: 32px; }
.address svg, .tools svg { fill: none; stroke: #e2e2e2; }
.address .off svg { stroke: #6f6f6f; }
.path { flex: 1; display: flex; align-items: center; height: 32px; margin: 0 8px 0 6px; padding-left: 13px; border-radius: 4px; background: #383838; }
.path .screen-line { stroke: #c8c8c8; margin-right: 20px; }
.path .sep { width: 6px; height: 10px; margin-right: 20px; color: #e2e2e2; stroke: none; }
.path .dots { fill: #e2e2e2; stroke: none; }
.path a { margin: 0 18px; }
.path .drive { margin: 0; }
.path .leaf { margin: 0 101px 0 auto; }
.search { display: flex; align-items: center; width: 304px; height: 32px; padding: 0 13px 0 15px; border-radius: 4px; background: #383838; }
.search input { flex: 1; min-width: 0; padding: 0; border: 0; outline: 0; background: none; color: #ccc; }
.search input::placeholder { color: #ccc; opacity: 1; }
.tools { display: flex; align-items: center; height: 55px; padding: 0 26px 0 21px; border-bottom: 1px solid #3d3d3d; }
.tools > button { width: 48px; height: 40px; }
.tools .blue { stroke: #4cc2ff; }
.tools .off { opacity: .4; }
.tools .bar { width: 1px; height: 32px; background: #333; }
.tools .create { width: 97px; gap: 8px; justify-content: flex-start; }
.tools .create + .bar { margin-right: 2px; }
.tools .sort { width: auto; gap: 8px; margin-left: 17px; }
.tools .details { width: auto; gap: 8px; margin-left: auto; }
.content { flex: 1; display: flex; min-height: 0; }
.side { width: 179px; margin: 0; padding: 6px 2px 0; border-right: 1px solid #333; list-style: none; }
.side li { display: flex; align-items: center; height: 32px; padding: 0 2px 0 32px; white-space: nowrap; overflow: hidden; }
.side a { display: flex; align-items: center; gap: 5px; }
.side .pin { width: 11px; height: 11px; margin-left: auto; }
.side .rule::before { content: ""; width: 158px; height: 1px; margin-left: -24px; background: #3d3d3d; }
.side .tree { padding-left: 11px; }
.side .twist { width: 6px; height: 10px; margin-right: 15px; color: #7d7d7d; }
.side .on { border-radius: 3px; background: #333; }
.files { flex: 1; padding-left: 15px; }
table { border-collapse: separate; border-spacing: 0 5px; text-align: left; margin-top: -5px; }
th { position: relative; height: 27px; padding: 0 0 0 6px; font-weight: 400; color: #dedede; }
th.name { padding-left: 16px; border-right: 1px solid #636363; }
.asc { position: absolute; left: 129px; top: 0; width: 8px; height: 5px; }
td { height: 26px; padding: 0 40px 0 6px; color: #dedede; }
td.name { position: relative; width: 258px; padding: 0 0 0 24px; color: #fff; }
.fi { position: absolute; left: 6px; top: 5px; width: 12px; height: 16px; }
.fi.exe { left: 4px; width: 16px; }
tr.on td { background: #777; }
.mark::after { content: ""; position: absolute; left: -2px; top: -6px; width: 141px; height: 40px; border: 5px solid #880015; }
.status { display: flex; align-items: center; gap: 10px; height: 24px; padding: 1px 7px 0 14px; background: #1c1c1c; color: #dedede; }
.status i { width: 1px; height: 10px; background: #fff; }
.status .on { width: 22px; height: 23px; margin-left: auto; margin-right: -6px; border: 1px solid #8a8a8a; background: #666; }

/* PBO2 Tuner window */
.tuner {
  position: absolute; left: 1101px; top: 450px; width: 357px; height: 533px;
  display: flex; flex-direction: column;
  border: 1px solid #8a8a8a; border-radius: 9px;
  background: #f0f0f0; color: #000; overflow: hidden;
  font: 13px/16px "Liberation Sans", sans-serif;
}
.tuner-title { display: flex; align-items: center; height: 30px; padding: 0 1px 2px 8px; background: #f3f3f3; color: #8c8c8c; font: 12px/16px "Open Sans", "Noto Sans", sans-serif; }
.tuner-title span { margin: 0 auto 0 6px; }
.tuner-title button { width: 45px; height: 28px; }
.tuner-title .off { color: #dcdcdc; }
.tuner-tabs { display: flex; align-items: flex-end; height: 21px; }
.tuner-tabs button { width: 45px; height: 19px; border: 1px solid #e2e2e2; border-bottom: 0; }
.tuner-tabs .on { width: 51px; height: 21px; background: #f9f9f9; }
.page { height: 293px; padding: 12px 0 0 71px; border: 1px solid #e0e0e0; border-left-color: #fafafa; background: #f4f4f4; }
.grid { display: grid; grid-template-columns: 58px 58px; grid-auto-rows: 21px; gap: 4px 89px; }
.grid input { width: 58px; height: 21px; border: 1px solid #e4e4e4; border-bottom-color: #868686; border-radius: 2px; background: #fff; }
.apply { justify-content: flex-start; width: 110px; height: 26px; margin: 28px 0 0 -35px; padding-left: 15px; border: 1px solid #d0d0d0; border-radius: 4px; background: #fdfdfd; }
.log { display: flex; height: 164px; padding: 1px 0 0 2px; border-bottom: 2px solid #fff; background: #fafafa; }
.log textarea { flex: 1; padding: 0; border: 0; outline: 0; resize: none; background: #282820; }
.scroll { width: 17px; padding: 6px 0 0 4px; border-left: 1px solid #fff; background: #f0f0f0; }
.scroll svg { width: 8px; height: 6px; }
.tuner-status { flex: 1; padding: 3px 9px; border-top: 1px solid #d7d7d7; background: #f0f0f0; }

/* Error dialog */
.dialog {
  position: absolute; left: 1161px; top: 681px; width: 253px; height: 133px;
  display: flex; flex-direction: column;
  border: 1px solid #a0a0a0; border-radius: 9px;
  background: #f0f0f0; color: #1a1a1a; overflow: hidden;
  box-shadow: 0 3px 14px rgba(0, 0, 0, .2);
}
.dialog header { display: flex; align-items: center; justify-content: space-between; height: 30px; padding: 0 10px 1px 8px; background: #f3f3f3; }
.dialog p { flex: 1; display: flex; align-items: center; margin: 0; padding: 0 11px; background: #fff; font-size: 11px; color: #000; white-space: nowrap; }
.dialog footer { display: flex; justify-content: flex-end; height: 42px; padding: 10px 16px 0; background: #f0f0f0; }
.dialog footer button { width: 73px; height: 21px; border: 1px solid #0078d4; border-radius: 4px; background: #fdfdfd; font-size: 11px; color: #000; }
```
